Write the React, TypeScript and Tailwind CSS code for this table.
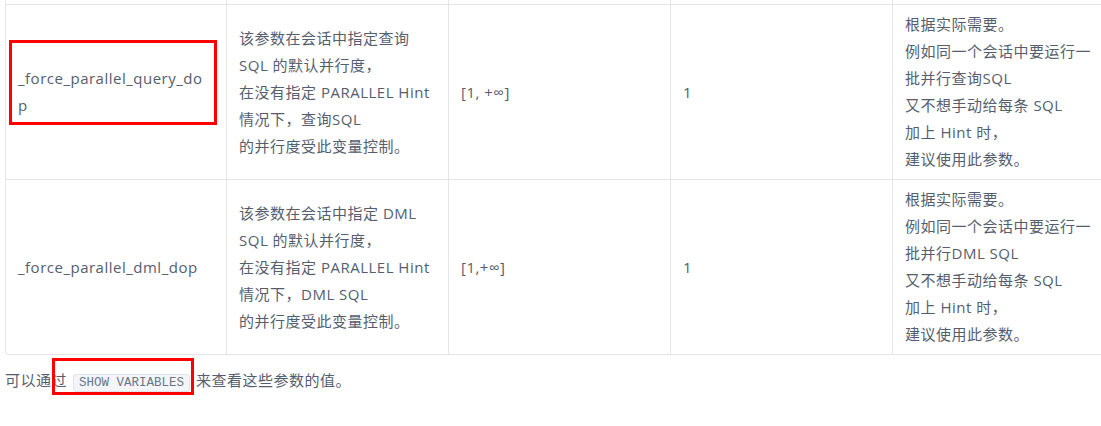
type Row = {
  name: string[];
  desc: string[];
  range: string;
  defaultValue: string;
  note: string[];
};

const rows: Row[] = [
  {
    name: ["_force_parallel_query_do", "p"],
    desc: [
      "该参数在会话中指定查询",
      "SQL 的默认并行度，",
      "在没有指定 PARALLEL Hint",
      "情况下，查询SQL",
      "的并行度受此变量控制。",
    ],
    range: "[1, +∞]",
    defaultValue: "1",
    note: [
      "根据实际需要。",
      "例如同一个会话中要运行一",
      "批并行查询SQL",
      "又不想手动给每条 SQL",
      "加上 Hint 时，",
      "建议使用此参数。",
    ],
  },
  {
    name: ["_force_parallel_dml_dop"],
    desc: [
      "该参数在会话中指定 DML",
      "SQL 的默认并行度，",
      "在没有指定 PARALLEL Hint",
      "情况下，DML SQL",
      "的并行度受此变量控制。",
    ],
    range: "[1,+∞]",
    defaultValue: "1",
    note: [
      "根据实际需要。",
      "例如同一个会话中要运行一",
      "批并行DML SQL",
      "又不想手动给每条 SQL",
      "加上 Hint 时，",
      "建议使用此参数。",
    ],
  },
];

const gridCols = "grid grid-cols-[220px_222px_222px_222px_222px]";

function Lines({ lines }: { lines: string[] }) {
  return (
    <div>
      {lines.map((line, i) => (
        <div key={i} className="whitespace-nowrap">
          {line}
        </div>
      ))}
    </div>
  );
}

function Cell({ children, first }: { children: React.ReactNode; first?: boolean }) {
  return (
    <div
      className={
        first
          ? "flex items-center px-3 py-[6px]"
          : "flex items-center border-l border-[#e3e5ea] px-3 py-[6px]"
      }
    >
      {children}
    </div>
  );
}

export default function App() {
  return (
    <div
      className="relative h-[426px] w-full overflow-hidden bg-white text-[15px] leading-[27px] tracking-[0.5px] text-[#555e6e]"
      style={{ fontFamily: '"Open Sans", "Noto Sans CJK SC", sans-serif' }}
    >
      <div className="pl-[5px]">
        <div className="w-[1110px] rounded-b-[4px] border-x border-b border-[#e3e5ea]">
          {/* tail of the previous row */}
          <div className={`${gridCols} h-[4px]`}>
            <div />
            <div className="border-l border-[#e3e5ea]" />
            <div className="border-l border-[#e3e5ea]" />
            <div className="border-l border-[#e3e5ea]" />
            <div className="border-l border-[#e3e5ea]" />
          </div>

          {rows.map((row) => (
            <div
              key={row.name.join("")}
              className={`${gridCols} h-[175px] border-t border-[#e3e5ea]`}
            >
              <Cell first>
                <Lines lines={row.name} />
              </Cell>
              <Cell>
                <Lines lines={row.desc} />
              </Cell>
              <Cell>
                <span>{row.range}</span>
              </Cell>
              <Cell>
                <span>{row.defaultValue}</span>
              </Cell>
              <Cell>
                <Lines lines={row.note} />
              </Cell>
            </div>
          ))}
        </div>

        <p className="mt-[12px]">
          可以通过
          <code
            className="mx-[6px] rounded-[3px] border border-[#e1e4ea] bg-[#f3f5f8] px-[5px] py-[1px] text-[12.5px] leading-[15px] tracking-normal text-[#6a7585]"
            style={{ fontFamily: '"Liberation Mono", monospace' }}
          >
            SHOW VARIABLES
          </code>
          来查看这些参数的值。
        </p>
      </div>

      {/* red annotation boxes */}
      <div className="pointer-events-none absolute left-[9px] top-[40px] h-[85px] w-[208px] border-[3px] border-[#ff0000]" />
      <div className="pointer-events-none absolute left-[52px] top-[358px] h-[37px] w-[142px] border-[3px] border-[#ff0000]" />
    </div>
  );
}
